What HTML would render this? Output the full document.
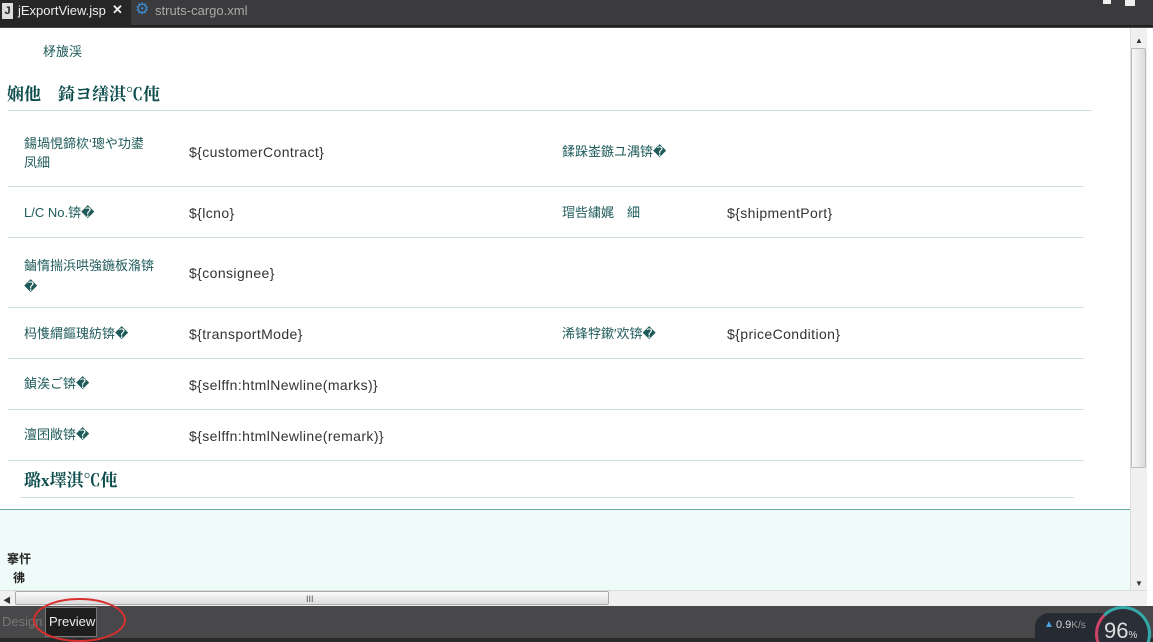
<!DOCTYPE html>
<html><head><meta charset="utf-8"><style>
*{margin:0;padding:0;box-sizing:border-box}
html,body{width:1153px;height:642px;overflow:hidden;background:#48484b}
body{position:relative;font-family:"Liberation Sans","Noto Sans CJK SC",sans-serif}
.a{position:absolute;line-height:16px}
.tabbar{left:0;top:0;width:1153px;height:27px;background:#3b3b3d;border-bottom:2px solid #222}
.lbl{color:#1e5a5a;font-size:13px}
.val{color:#333;font-size:14px;letter-spacing:0.4px}
.ln{height:1px;background:#cfdede}
.h{color:#0e4d4d;font-size:17px;font-weight:bold;font-family:"Liberation Serif","Noto Serif CJK SC",serif;line-height:20px}
</style></head><body>
<div class="a tabbar"></div>
<div class="a" style="left:0;top:0;width:131px;height:26px;background:#262627"></div>
<div class="a" style="left:2px;top:3px;width:11px;height:16px;background:#ddd;color:#222;font-size:11px;font-weight:bold;text-align:center">J</div>
<div class="a" style="left:18px;top:3px;color:#eee;font-size:13px">jExportView.jsp</div>
<div class="a" style="left:112px;top:2px;color:#eee;font-size:13px;font-weight:bold">✕</div>
<div class="a" style="left:135px;top:2px;color:#3a8fd8;font-size:16px">⚙</div>
<div class="a" style="left:155px;top:3px;color:#aaa;font-size:13px">struts-cargo.xml</div>
<div class="a" style="left:1103px;top:0;width:8px;height:4px;background:#eee"></div>
<div class="a" style="left:1125px;top:0;width:10px;height:6px;background:#eee"></div>

<div class="a" style="left:0;top:28px;width:1153px;height:481px;background:#fff"></div>
<div class="a lbl" style="left:43px;top:44px">柕旇渓</div>
<div class="a h" style="left:7px;top:85px">娴他　錡ヨ缮淇℃伅</div>
<div class="a ln" style="left:8px;top:110px;width:1084px"></div>

<div class="a lbl" style="left:24px;top:134px;line-height:19px">鍚堝悓鍗栨‘璁や功鍙<br>凤細</div>
<div class="a val" style="left:189px;top:144px">${customerContract}</div>
<div class="a lbl" style="left:562px;top:144px">鍒跺崟鏃ユ湡锛�</div>
<div class="a ln" style="left:8px;top:186px;width:1076px"></div>
<div class="a lbl" style="left:24px;top:205px">L/C No.锛�</div>
<div class="a val" style="left:189px;top:205px">${lcno}</div>
<div class="a lbl" style="left:562px;top:205px">瑁呰繍娓　細</div>
<div class="a val" style="left:727px;top:205px">${shipmentPort}</div>
<div class="a ln" style="left:8px;top:237px;width:1076px"></div>
<div class="a lbl" style="left:24px;top:255px;line-height:21px">鏀惰揣浜哄強鍦板潃锛<br>�</div>
<div class="a val" style="left:189px;top:265px">${consignee}</div>
<div class="a ln" style="left:8px;top:307px;width:1076px"></div>
<div class="a lbl" style="left:24px;top:326px">杩愯緭鏂瑰紡锛�</div>
<div class="a val" style="left:189px;top:326px">${transportMode}</div>
<div class="a lbl" style="left:562px;top:326px">浠锋牸鏉′欢锛�</div>
<div class="a val" style="left:727px;top:326px">${priceCondition}</div>
<div class="a ln" style="left:8px;top:358px;width:1076px"></div>
<div class="a lbl" style="left:24px;top:376px">鍞涘ご锛�</div>
<div class="a val" style="left:189px;top:377px">${selffn:htmlNewline(marks)}</div>
<div class="a ln" style="left:8px;top:409px;width:1076px"></div>
<div class="a lbl" style="left:24px;top:427px">澶囨敞锛�</div>
<div class="a val" style="left:189px;top:428px">${selffn:htmlNewline(remark)}</div>
<div class="a ln" style="left:8px;top:460px;width:1076px"></div>
<div class="a h" style="left:24px;top:471px">璐х墿淇℃伅</div>
<div class="a ln" style="left:20px;top:497px;width:1054px"></div>

<div class="a" style="left:0;top:509px;width:1130px;height:81px;background:#effbf8;border-top:1px solid #6aa"></div>
<div class="a" style="left:7px;top:551px;font-size:12px;font-weight:bold;color:#222">搴忓</div>
<div class="a" style="left:13px;top:570px;font-size:12px;font-weight:bold;color:#222">彿</div>

<div class="a" style="left:1130px;top:28px;width:17px;height:562px;background:#f0f0f0;border-left:1px solid #ddd"></div>
<div class="a" style="left:1135px;top:33px;font-size:8px;color:#333">▲</div>
<div class="a" style="left:1131px;top:48px;width:15px;height:420px;background:linear-gradient(90deg,#f8f8f8,#dcdcdc);border:1px solid #bbb;border-radius:2px"></div>
<div class="a" style="left:1135px;top:576px;font-size:8px;color:#333">▼</div>
<div class="a" style="left:1147px;top:28px;width:6px;height:578px;background:#fff"></div>
<div class="a" style="left:0;top:590px;width:1147px;height:16px;background:#f0f0f0;border-top:1px solid #ddd"></div>
<div class="a" style="left:3px;top:593px;font-size:8px;color:#333">◀</div>
<div class="a" style="left:15px;top:591px;width:594px;height:14px;background:linear-gradient(#fafafa,#dcdcdc);border:1px solid #aaa;border-radius:2px"></div>
<div class="a" style="left:306px;top:591px;font-size:9px;color:#555">III</div>

<div class="a" style="left:0;top:606px;width:1153px;height:36px;background:#48484b"></div>
<div class="a" style="left:0;top:638px;width:1153px;height:4px;background:#2a2a2a"></div>
<div class="a" style="left:2px;top:614px;color:#777;font-size:13px">Design</div>
<div class="a" style="left:45px;top:607px;width:52px;height:30px;background:#1e1e1e;border:1px solid #777"></div>
<div class="a" style="left:49px;top:614px;color:#eee;font-size:13px">Preview</div>
<div class="a" style="left:33px;top:598px;width:93px;height:44px;border:2px solid #d83030;border-radius:50%"></div>
<div class="a" style="left:1035px;top:613px;width:70px;height:29px;background:#252a33;border-radius:14px 0 0 0"></div>
<div class="a" style="left:1044px;top:617px;color:#4aa0e0;font-size:10px">▲</div>
<div class="a" style="left:1056px;top:617px;color:#ddd;font-size:11px">0.9<span style="color:#999;font-size:10px">K/s</span></div>
<div class="a" style="left:1095px;top:606px;width:56px;height:56px;border-radius:50%;background:#2a2e36;border:3px solid #3aa;border-left-color:#c46"></div>
<div class="a" style="left:1104px;top:619px;color:#ddd;font-size:22px;line-height:24px">96<span style="font-size:10px">%</span></div>
</body></html>
